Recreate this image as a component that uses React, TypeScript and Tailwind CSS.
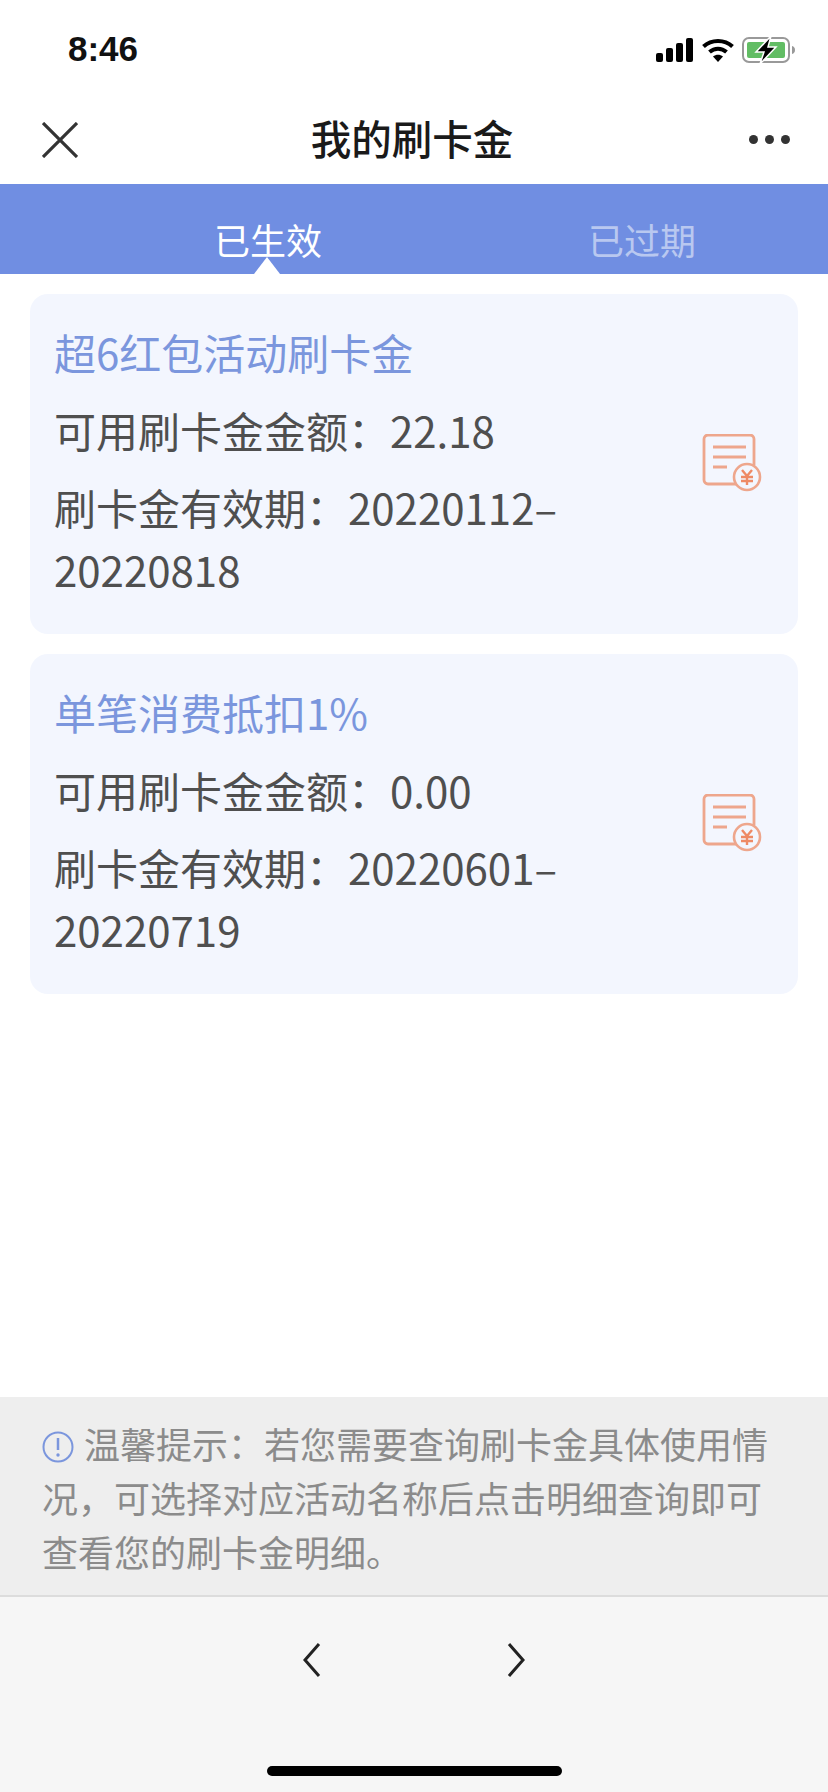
const cjk = "font-['Noto_Sans_CJK_SC','Noto_Sans',sans-serif]";
const COLON = "\uFF1A";
const COMMA = "\uFF0C";

function Bill() {
  return (
    <svg width="60" height="58" viewBox="0 0 60 58" fill="none" className="mt-[3px] shrink-0">
      <path d="M34 50H6a4 4 0 0 1-4-4V5a4 4 0 0 1 4-4h42a4 4 0 0 1 4 4v26" stroke="#eea68c" strokeWidth="2.800" />
      <path d="M11 13h33M11 23h33M11 33h14" stroke="#eea68c" strokeWidth="2.800" />
      <circle cx="45" cy="43" r="13" stroke="#eea68c" strokeWidth="2.600" fill="#f3f6fe" />
      <path d="M40 36l5 6 5-6M39 43h12M39 47h12M45 42v9" stroke="#ee8a66" strokeWidth="2.400" />
    </svg>
  );
}

function Card({ title, amount, date1, date2 }: { title: string; amount: string; date1: string; date2: string }) {
  return (
    <div className="flex items-center justify-between rounded-[18px] bg-[#f3f6fe] pl-6 pr-[36px] pt-[28px] pb-[34px]">
      <div className="w-[560px] shrink-0 text-[42px] leading-[62px] text-[#4f4f4f]">
        <div className="mb-[17px] leading-[60px] text-[#7b96dd]">{title}</div>
        <div className="mb-[15px]">{`可用刷卡金金额${COLON}${amount}`}</div>
        <div>{`刷卡金有效期${COLON}${date1}\u2013`}</div>
        <div>{date2}</div>
      </div>
      <Bill />
    </div>
  );
}

export default function App() {
  return (
    <div className={`${cjk} flex h-[1792px] w-[828px] flex-col overflow-hidden bg-white`}>
      <div className="flex h-[95px] shrink-0 items-start justify-between pl-[68px] pr-[32px] pt-[30px]">
        <span className="font-['Liberation_Sans',sans-serif] text-[35px] font-bold leading-[38px] text-[#111]">8:46</span>
        <div className="mt-[6px] flex items-center gap-[8px]">
          <svg width="38" height="24" viewBox="0 0 38 24" fill="#000">
            <rect x="0" y="15" width="7" height="9" rx="2" />
            <rect x="10" y="10" width="7" height="14" rx="2" />
            <rect x="20" y="5" width="7" height="19" rx="2" />
            <rect x="30" y="0" width="7" height="24" rx="2" />
          </svg>
          <svg width="32" height="24" viewBox="0 0 32 24" fill="none" stroke="#000" strokeWidth="4">
            <path d="M1.500 8.500C9.500 1 22.500 1 30.500 8.500" />
            <path d="M7.500 14c5-4.500 12-4.500 17 0" />
            <path d="M16 24l-5-5.500c3-2.500 7-2.500 10 0z" fill="#000" stroke="none" />
          </svg>
          <svg width="54" height="28" viewBox="0 0 54 28" fill="none">
            <rect x="1" y="2" width="46" height="24" rx="6" stroke="#999" strokeWidth="2" />
            <rect x="5" y="6" width="38" height="16" rx="2" fill="#62bd64" />
            <path d="M50 10c2 .5 3 2 3 4s-1 3.500-3 4z" fill="#999" />
            <path d="M29 0L14 16h8l-4 12 16-17h-8z" fill="#000" stroke="#fff" strokeWidth="1.500" />
          </svg>
        </div>
      </div>

      <div className="flex h-[89px] shrink-0 items-center justify-between pl-[42px] pr-[38px]">
        <svg width="36" height="36" viewBox="0 0 36 36" fill="none" stroke="#333" strokeWidth="3.200">
          <path d="M1 1l34 34M35 1L1 35" />
        </svg>
        <span className="ml-[-3px] mb-[3px] text-[40.500px] font-medium leading-[50px] text-[#1a1a1a]">我的刷卡金</span>
        <div className="flex gap-[7px]">
          <span className="h-[9px] w-[9px] rounded-full bg-[#333]" />
          <span className="h-[9px] w-[9px] rounded-full bg-[#333]" />
          <span className="h-[9px] w-[9px] rounded-full bg-[#333]" />
        </div>
      </div>

      <div className="flex h-[90px] shrink-0 bg-[#708ee2] text-[36px] leading-[46px]">
        <div className="relative ml-[214px] pt-[32px] text-white">
          已生效
          <span className="absolute bottom-0 left-[40px] h-0 w-0 border-x-[13px] border-b-[17px] border-x-transparent border-b-white" />
        </div>
        <div className="ml-[266px] pt-[32px] text-[#b9c8f0]">已过期</div>
      </div>

      <div className="flex flex-col gap-[20px] px-[30px] pt-[20px]">
        <Card title="超6红包活动刷卡金" amount="22.18" date1="20220112" date2="20220818" />
        <Card title="单笔消费抵扣1%" amount="0.00" date1="20220601" date2="20220719" />
      </div>

      <div className="mt-auto shrink-0 border-b-2 border-[#dcdcdc] bg-[#eeeeee] px-[42px] pt-[19px] pb-[17px] text-[36px] leading-[54px] text-[#8b8b8b]">
        <svg width="32" height="32" viewBox="0 0 32 32" fill="none" className="mr-[10px] inline-block align-[-4px]">
          <circle cx="16" cy="16" r="14.500" stroke="#7b96dd" strokeWidth="2" />
          <path d="M16 7v12" stroke="#7b96dd" strokeWidth="2.500" />
          <circle cx="16" cy="24" r="1.700" fill="#7b96dd" />
        </svg>
        {`温馨提示${COLON}若您需要查询刷卡金具体使用情况${COMMA}可选择对应活动名称后点击明细查询即可查看您的刷卡金明细。`}
      </div>

      <div className="flex h-[195px] shrink-0 flex-col items-center bg-[#f6f6f6]">
        <div className="mt-[46px] flex gap-[186px]">
          <svg width="18" height="34" viewBox="0 0 18 34" fill="none" stroke="#222" strokeWidth="3">
            <path d="M16 1L2 17l14 16" />
          </svg>
          <svg width="18" height="34" viewBox="0 0 18 34" fill="none" stroke="#222" strokeWidth="3">
            <path d="M2 1l14 16L2 33" />
          </svg>
        </div>
        <div className="mt-[89px] h-[10px] w-[295px] rounded-full bg-black" />
      </div>
    </div>
  );
}
